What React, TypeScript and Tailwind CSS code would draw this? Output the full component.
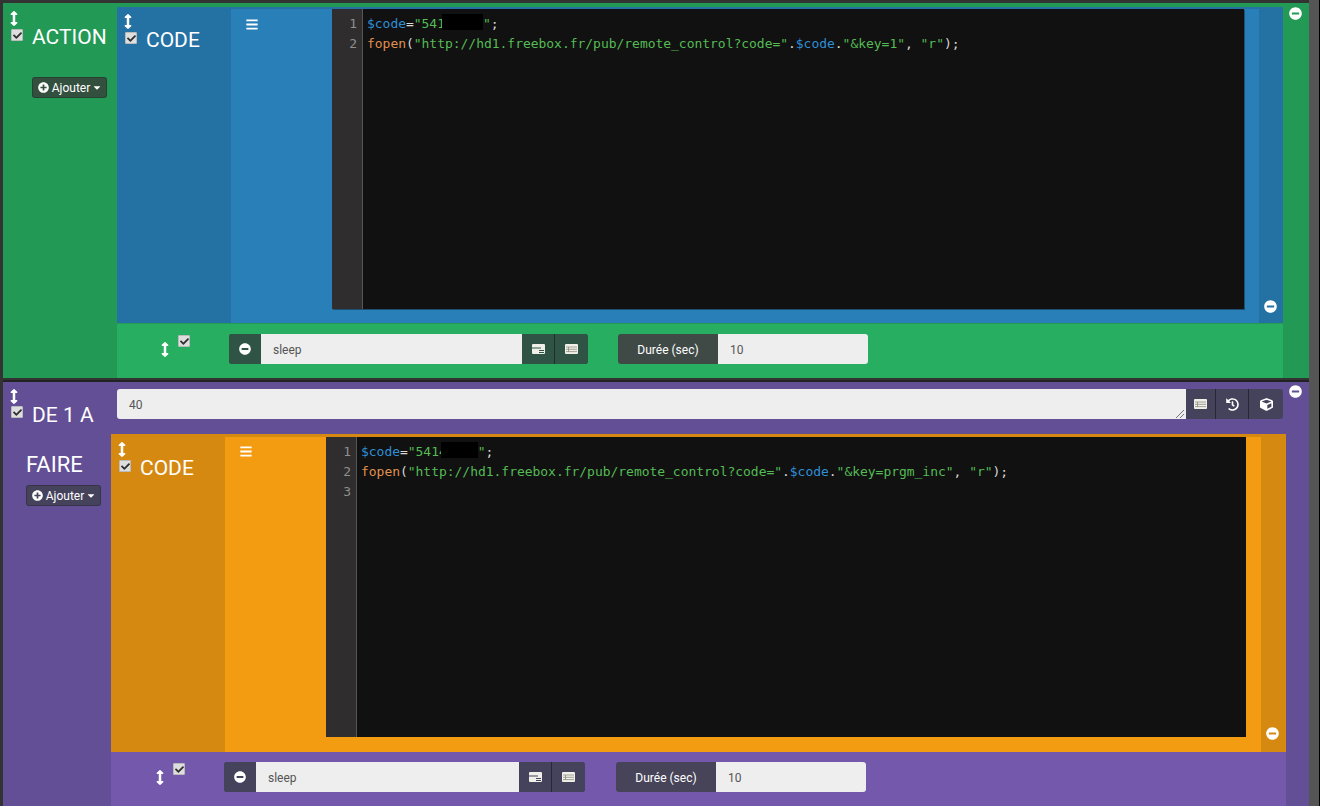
import type { ReactNode } from "react";
import { FaBars, FaCaretDown, FaCheck, FaCube, FaHistory, FaMinusCircle, FaPlusCircle, FaArrowsAltV } from "react-icons/fa";

function Check({ className = "" }: { className?: string }) {
  return (
    <span className={`flex h-[12px] w-[12px] items-center justify-center rounded-[1px] border border-[#bbb] bg-[#dedede] text-[#2f2f2f] ${className}`}>
      <FaCheck className="h-[9px] w-[9px]" />
    </span>
  );
}

function Move({ className = "" }: { className?: string }) {
  return <FaArrowsAltV className={`h-[15px] w-[8px] text-white ${className}`} preserveAspectRatio="none" />;
}

function Remove({ className = "" }: { className?: string }) {
  return <FaMinusCircle className={`absolute h-[13px] w-[13px] text-white ${className}`} />;
}

function CardIcon() {
  return (
    <svg viewBox="0 0 13 10" className="h-[10px] w-[13px]">
      <path fill="#f0f0e8" fillRule="evenodd" d="M1 0h11a1 1 0 0 1 1 1v8a1 1 0 0 1-1 1H1a1 1 0 0 1-1-1V1a1 1 0 0 1 1-1zM0 3.500v1h9v-1zM7 6v1h5V6zM7 8v1h5V8z" />
    </svg>
  );
}

function ListIcon() {
  return (
    <svg viewBox="0 0 13 10" className="h-[10px] w-[13px]">
      <rect width="13" height="10" rx="1" fill="#f0f0e8" />
      <path stroke="#8d8d80" strokeWidth="0.8" fill="none" d="M1 3h11M1 5.300h11M1 7.600h11M3.500 3v5" />
    </svg>
  );
}

function Addon({ tone, children, className = "" }: { tone: string; children: ReactNode; className?: string }) {
  return <span className={`flex h-full items-center justify-center text-white ${tone} ${className}`}>{children}</span>;
}

function AddButton({ tone, className = "" }: { tone: string; className?: string }) {
  return (
    <button type="button" className={`flex h-[21px] w-[75px] items-center justify-center gap-[3px] rounded-[3px] border border-black/20 text-[12px] text-white ${tone} ${className}`}>
      <FaPlusCircle className="h-[11px] w-[11px]" />
      Ajouter
      <FaCaretDown className="h-[11px] w-[8px]" />
    </button>
  );
}

function Title({ children }: { children: ReactNode }) {
  return <span className="ml-[9px] -mt-[1px] text-[21px] leading-[20px] text-white">{children}</span>;
}

type FooterProps = {
  bg: string;
  tone: string;
  labelTone: string;
  className: string;
  inputWidth: string;
  labelGap: string;
};

function Footer({ bg, tone, labelTone, className, inputWidth, labelGap }: FooterProps) {
  return (
    <div className={`flex h-[54px] items-start ${bg} ${className}`}>
      <Move className="mt-[18px]" />
      <Check className="mt-[11px] ml-[9px]" />
      <div className={`ml-[39px] mt-[10px] flex h-[30px] overflow-hidden rounded-[3px] text-[12px] ${tone}`}>
        <Addon tone={tone} className="w-[32px]">
          <FaMinusCircle className="h-[12px] w-[12px]" />
        </Addon>
        <div className={`flex items-center bg-[#eeeeee] pl-[12px] pt-px text-[#555] ${inputWidth}`}>sleep</div>
        <Addon tone={tone} className="w-[33px] border-r border-black/40">
          <CardIcon />
        </Addon>
        <Addon tone={tone} className="w-[33px]">
          <ListIcon />
        </Addon>
      </div>
      <div className={`${labelGap} mt-[10px] flex h-[30px] overflow-hidden rounded-[3px] text-[12px]`}>
        <Addon tone={labelTone} className="w-[100px] pt-px">Durée (sec)</Addon>
        <div className="flex w-[150px] items-center bg-[#eeeeee] pl-[12px] pt-px text-[#555]">10</div>
      </div>
    </div>
  );
}

function Gutter({ lines }: { lines: number[] }) {
  return (
    <div className="w-[31px] shrink-0 border-r border-[#555] bg-[#2f2d2e] pt-[5px] pr-[5px] text-right text-[#8f8f8f]">
      {lines.map((n) => (
        <div key={n} className="h-[20px]">{n}</div>
      ))}
    </div>
  );
}

function CodeLine({ keyName, digits, box }: { keyName: string; digits: string; box: string }) {
  return (
    <div className="pt-[5px] pl-[4px] text-[#d8d8d8]">
      <div className="h-[20px] whitespace-pre">
        <span className="text-[#2f8fd6]">$code</span>=<span className="text-[#55bb55]">"{digits}</span>
        <span className={`inline-block h-[16px] bg-black align-top ${box}`} />
        <span className="text-[#55bb55]">"</span>;
      </div>
      <div className="h-[20px] whitespace-pre">
        <span className="text-[#e0904f]">fopen</span>(<span className="text-[#55bb55]">"http://hd1.freebox.fr/pub/remote_control?code="</span>.<span className="text-[#2f8fd6]">$code</span>.<span className="text-[#55bb55]">"&amp;key={keyName}"</span>, <span className="text-[#55bb55]">"r"</span>);
      </div>
    </div>
  );
}

function Editor({ className, lines, children }: { className: string; lines: number[]; children: ReactNode }) {
  return (
    <div className={`flex bg-[#111111] font-['DejaVu_Sans_Mono',monospace] text-[13px] leading-[20px] tracking-[-0.03px] ${className}`}>
      <Gutter lines={lines} />
      {children}
    </div>
  );
}

export default function App() {
  return (
    <div className="flex h-[806px] overflow-hidden bg-[#333333] font-['Roboto',sans-serif]">
      <div className="flex w-[1309px] shrink-0 flex-col pt-[3px] pl-[3px]">
        {/* action block */}
        <section className="relative flex h-[375px] shrink-0 bg-[#229954]">
          <Remove className="top-[4px] right-[7px]" />
          <div className="w-[114px] shrink-0 pl-[8px] pt-[8px]">
            <Move className="ml-[-1px]" />
            <div className="mt-[2px] flex items-start">
              <Check className="mt-[1px]" />
              <Title>ACTION</Title>
            </div>
            <AddButton tone="bg-[#33503f]" className="ml-[21px] mt-[30px]" />
          </div>
          <div className="flex w-[1166px] flex-col pt-[4px]">
            <div className="relative flex h-[317px] bg-[#2471a3]">
              <Remove className="right-[6px] bottom-[10px]" />
              <div className="w-[114px] shrink-0 pl-[8px] pt-[7px]">
                <Move className="ml-[-1px]" />
                <div className="mt-[2px] flex items-start">
                  <Check className="mt-[1px]" />
                  <Title>CODE</Title>
                </div>
              </div>
              <div className="mt-[2px] flex w-[1028px] items-start bg-[#2980b9] pl-[15px]">
                <FaBars className="mt-[9px] h-[13px] w-[12px] text-white" />
                <Editor className="ml-[74px] h-[300px] w-[912px] shadow-[1px_1px_0_#1d4f73]" lines={[1, 2]}>
                  <CodeLine keyName="1" digits="541" box="ml-[-3px] w-[41px]" />
                </Editor>
              </div>
            </div>
            <Footer bg="bg-[#27ae60]" tone="bg-[#2f5445]" labelTone="bg-[#3f4a47]" className="mt-px pl-[44px]" inputWidth="w-[261px]" labelGap="ml-[30px]" />
          </div>
        </section>

        {/* loop block */}
        <section className="relative mt-[2px] flex-1 border-t-2 border-[#222] bg-[#634f95]">
          <Remove className="top-[3px] right-[7px]" />
          <div className="flex h-[52px] items-start">
            <div className="w-[114px] shrink-0 pl-[8px] pt-[7px]">
              <Move className="ml-[-1px]" />
              <div className="mt-[2px] flex items-start">
                <Check />
                <Title>DE 1 A</Title>
              </div>
            </div>
            <div className="mt-[7px] flex h-[30px] w-[1166px] overflow-hidden rounded-[3px] text-[12px]">
              <div className="relative flex flex-1 items-center bg-[#eeeeee] pl-[12px] pt-px text-[#555]">
                40
                <svg viewBox="0 0 8 8" className="absolute right-[2px] bottom-[1px] h-[8px] w-[8px]">
                  <path stroke="#555" strokeWidth="0.8" d="M0 8L8 0M4 8L8 4" />
                </svg>
              </div>
              <Addon tone="bg-[#45425c]" className="w-[30px] border-r border-black/40">
                <ListIcon />
              </Addon>
              <Addon tone="bg-[#45425c]" className="w-[33px] border-r border-black/40">
                <FaHistory className="h-[13px] w-[13px]" />
              </Addon>
              <Addon tone="bg-[#45425c]" className="w-[34px]">
                <FaCube className="h-[13px] w-[13px]" />
              </Addon>
            </div>
          </div>
          <div className="flex">
            <div className="w-[108px] shrink-0 pl-[23px] pt-[19px]">
              <div className="text-[22px] leading-[24px] text-white">FAIRE</div>
              <AddButton tone="bg-[#45425c]" className="mt-[8px]" />
            </div>
            <div className="flex w-[1175px] flex-col">
              <div className="relative flex h-[318px] bg-[#d68910]">
                <Remove className="right-[7px] bottom-[12px]" />
                <div className="w-[114px] shrink-0 pl-[8px] pt-[8px]">
                  <Move className="ml-[-1px]" />
                  <div className="mt-[2px] flex items-start">
                    <Check className="mt-[1px]" />
                    <Title>CODE</Title>
                  </div>
                </div>
                <div className="mt-[3px] flex w-[1036px] items-start bg-[#f39c12] pl-[15px]">
                  <FaBars className="mt-[8px] h-[13px] w-[12px] text-white" />
                  <Editor className="ml-[74px] h-[300px] w-[920px]" lines={[1, 2, 3]}>
                    <CodeLine keyName="prgm_inc" digits="5414" box="ml-[-6px] w-[37px]" />
                  </Editor>
                </div>
              </div>
              <Footer bg="bg-[#7458ab]" tone="bg-[#45425c]" labelTone="bg-[#474459]" className="pl-[45px]" inputWidth="w-[263px]" labelGap="ml-[31px]" />
            </div>
          </div>
        </section>
      </div>
      <div className="w-[11px] shrink-0 border-r border-black bg-[#555555]" />
    </div>
  );
}
